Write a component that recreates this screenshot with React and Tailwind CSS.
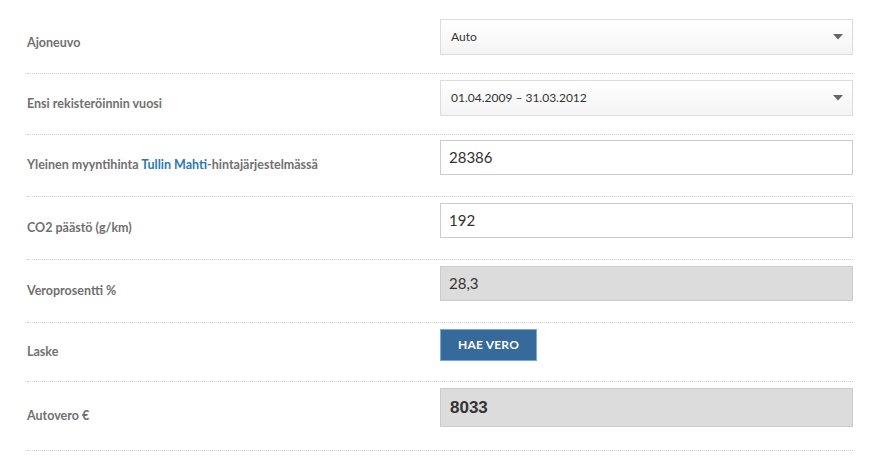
function Select({ value }) {
  return (
    <div className="flex items-center justify-between h-[36px] border border-[#dcdcdc] bg-gradient-to-b from-white to-[#f4f4f4] pl-[10px] pr-[8px] text-[12px] text-[#333] font-['Lato',sans-serif]">
      <span>{value}</span>
      <svg width="10" height="6" viewBox="0 0 10 6" className="mr-[1px]">
        <path d="M0 0h10L5 5.5z" fill="#666" />
      </svg>
    </div>
  );
}

function Input({ value, readOnly, big }) {
  return (
    <div
      className={
        "flex items-center border border-[#cccccc] pl-[8px] text-[#333] " +
        (readOnly ? "bg-[#dcdcdc] " : "bg-white ") +
        (big
          ? "h-[39px] pl-[9px] font-['Liberation_Sans',Arial,sans-serif] font-bold text-[17px] text-[#222]"
          : "h-[35px] font-['Lato',sans-serif] text-[15px]")
      }
    >
      {value}
    </div>
  );
}

function Row({ label, children, pad }) {
  return (
    <div className="flex items-center border-b border-dotted border-[#cfcfcf]">
      <div className="w-[413px] shrink-0 text-[12.5px] font-bold text-[#707070]">{label}</div>
      <div className={"flex-1 " + pad}>{children}</div>
    </div>
  );
}

export default function App() {
  return (
    <div className="w-[881px] h-[455px] bg-white pl-[27px] pr-[28px] pt-[13px] font-['Lato',sans-serif]">
      <Row label="Ajoneuvo" pad="pt-[6px] pb-[18px]">
        <Select value="Auto" />
      </Row>
      <Row label="Ensi rekisteröinnin vuosi" pad="pt-[6px] pb-[18px]">
        <Select value="01.04.2009 – 31.03.2012" />
      </Row>
      <Row
        label={
          <>
            Yleinen myyntihinta <span className="text-[#2a78b8]">Tullin Mahti</span>-hintajärjestelmässä
          </>
        }
        pad="pt-[5px] pb-[21px]"
      >
        <Input value="28386" />
      </Row>
      <Row label="CO2 päästö (g/km)" pad="pt-[6px] pb-[21px]">
        <Input value="192" />
      </Row>
      <Row label="Veroprosentti %" pad="pt-[6px] pb-[21px]">
        <Input value="28,3" readOnly />
      </Row>
      <Row label="Laske" pad="pt-[6px] pb-[20px]">
        <button className="h-[32px] w-[97px] bg-[#356a9a] border border-[#74a8ee] text-white text-[12px] font-bold tracking-[0.2px]">
          HAE VERO
        </button>
      </Row>
      <Row label="Autovero €" pad="pt-[6px] pb-[23px]">
        <Input value="8033" readOnly big />
      </Row>
    </div>
  );
}
